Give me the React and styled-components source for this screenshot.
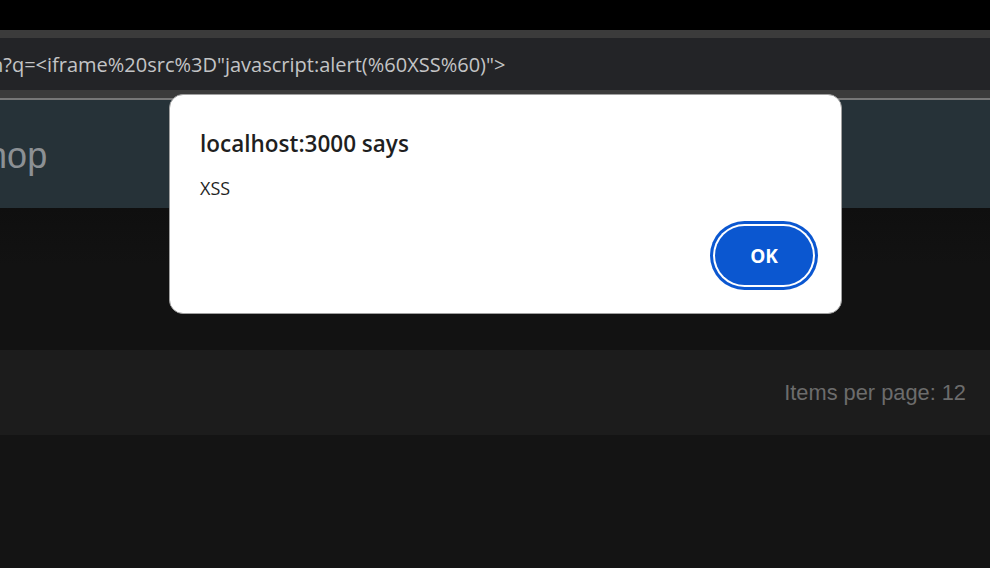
import styled, { createGlobalStyle } from "styled-components";

const Global = createGlobalStyle`
  html, body { margin: 0; padding: 0; background: #141414; }
  body { width: 990px; height: 568px; overflow: hidden; position: relative; }
`;

const Screen = styled.div`
  width: 990px;
  height: 568px;
  display: flex;
  flex-direction: column;
  background: #141414;
  position: relative;
  overflow: hidden;
`;

const TopStrip = styled.div`
  height: 30px;
  background: #000;
`;

const AddressFrame = styled.div`
  background: #3b3b3b;
  padding: 8px 0;
`;

const AddressBar = styled.div`
  height: 52px;
  background: #232427;
  display: flex;
  align-items: center;
  overflow: hidden;
  white-space: nowrap;
  font-family: "Open Sans", "Noto Sans", sans-serif;
  font-size: 20px;
  color: #c3c4c6;
  text-indent: -9px;
`;

const Divider = styled.div`
  height: 2px;
  background: #777;
`;

const Header = styled.header`
  height: 108px;
  background: #263238;
  display: flex;
  align-items: center;
  padding-top: 4px;
  box-sizing: border-box;
  overflow: hidden;
  white-space: nowrap;
  font-family: "Liberation Sans", Arial, sans-serif;
  font-size: 36px;
  color: #8c9094;
  text-indent: -273px;
`;

const Gap = styled.div`
  height: 142px;
  background: linear-gradient(#0f0f0f, #121212 40%, #121212);
`;

const Toolbar = styled.div`
  height: 85px;
  background: #1c1c1c;
  display: flex;
  align-items: center;
  justify-content: flex-end;
  padding-right: 24px;
  font-family: "Liberation Sans", Arial, sans-serif;
  font-size: 21.8px;
  color: #6c6c6c;
`;

const Dialog = styled.div`
  position: absolute;
  left: 169px;
  top: 94px;
  width: 673px;
  height: 220px;
  box-sizing: border-box;
  background: #fff;
  border: 1px solid #a0a0a0;
  border-radius: 14px;
  padding: 34px 24px 0 30px;
  display: flex;
  flex-direction: column;
  font-family: "Open Sans", "Noto Sans", sans-serif;
  color: #1f1f1f;
`;

const Title = styled.div`
  font-size: 22.5px;
  font-weight: 600;
  line-height: 30px;
`;

const Message = styled.div`
  font-size: 18px;
  line-height: 24px;
  margin-top: 17px;
`;

const Actions = styled.div`
  margin-top: auto;
  display: flex;
  justify-content: flex-end;
  padding-bottom: 28px;
`;

const OkButton = styled.button`
  width: 98px;
  height: 59px;
  margin-right: 4px;
  border: none;
  border-radius: 30px;
  background: #0b57d0;
  color: #fff;
  font-family: "Open Sans", "Noto Sans", sans-serif;
  font-size: 19px;
  font-weight: 700;
  box-shadow: 0 0 0 2px #fff, 0 0 0 5px #0b57d0;
  cursor: pointer;
`;

export default function App() {
  return (
    <>
      <Global />
      <Screen>
        <TopStrip />
        <AddressFrame>
          <AddressBar>n?q=&lt;iframe%20src%3D"javascript:alert(%60XSS%60)"&gt;</AddressBar>
        </AddressFrame>
        <Divider />
        <Header>OWASP Juice Shop</Header>
        <Gap />
        <Toolbar>Items per page: 12</Toolbar>
        <Dialog>
          <Title>localhost:3000 says</Title>
          <Message>XSS</Message>
          <Actions>
            <OkButton>OK</OkButton>
          </Actions>
        </Dialog>
      </Screen>
    </>
  );
}
